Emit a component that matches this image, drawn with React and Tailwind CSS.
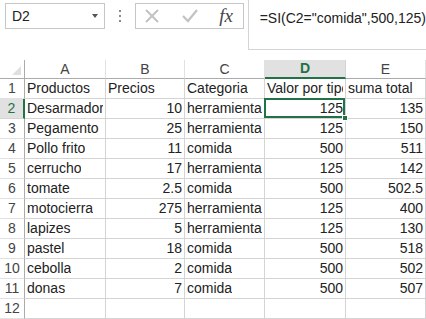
import React from 'react';

const rows = [
  ['Productos', 'Precios', 'Categoria', 'Valor por tipo', 'suma total'],
  ['Desarmadores', 10, 'herramienta', 125, 135],
  ['Pegamento', 25, 'herramienta', 125, 150],
  ['Pollo frito', 11, 'comida', 500, 511],
  ['cerrucho', 17, 'herramienta', 125, 142],
  ['tomate', 2.5, 'comida', 500, 502.5],
  ['motocierra', 275, 'herramienta', 125, 400],
  ['lapizes', 5, 'herramienta', 125, 130],
  ['pastel', 18, 'comida', 500, 518],
  ['cebolla', 2, 'comida', 500, 502],
  ['donas', 7, 'comida', 500, 507],
  ['', '', '', '', ''],
];

const cols = ['A', 'B', 'C', 'D', 'E'];

const App = () => {
  return (
    <div className="w-[426px] h-[319px] overflow-hidden bg-white text-[14px] text-[#222]" style={{ fontFamily: '"Liberation Sans", Arial, sans-serif' }}>
      {/* barra de formulas */}
      <div className="flex h-[60px] items-start">
        <div className="ml-[5px] mt-[3px] flex h-[26px] w-[101px] items-center justify-between border border-[#c6c6c6] pl-[6px] pr-[6px]">
          <span className="text-[14px] text-[#222]">D2</span>
          <span className="h-0 w-0 border-x-[3px] border-t-[4px] border-x-transparent border-t-[#555]"></span>
        </div>
        <div className="mt-[3px] flex h-[26px] w-[31px] flex-col items-center justify-center gap-[3px]">
          <span className="h-[2px] w-[2px] bg-[#888]"></span>
          <span className="h-[2px] w-[2px] bg-[#888]"></span>
          <span className="h-[2px] w-[2px] bg-[#888]"></span>
        </div>
        <div className="mt-[3px] flex h-[26px] w-[110px] items-center border border-[#c6c6c6]">
          <svg className="ml-[9px]" width="14" height="14" viewBox="0 0 14 14">
            <path d="M1 1 L13 13 M13 1 L1 13" stroke="#c2c2c2" strokeWidth="2" fill="none" />
          </svg>
          <svg className="ml-[23px]" width="16" height="14" viewBox="0 0 16 14">
            <path d="M1 7 L6 12 L15 1" stroke="#c2c2c2" strokeWidth="2.2" fill="none" />
          </svg>
          <span className="ml-[21px] text-[19px] italic text-[#444]" style={{ fontFamily: '"Liberation Serif", serif' }}>fx</span>
        </div>
        <div className="ml-[4px] flex h-[50px] flex-1 items-start border-b border-l border-[#d4d4d4] pl-[11px] pt-[8px]">
          <span>=SI(C2="comida",500,125)</span>
        </div>
      </div>

      {/* hoja */}
      <div className="grid grid-cols-[25px_81px_79px_80px_81px_80px]">
        <div className="relative h-[19px] border-b border-r border-[#ababab]">
          <span className="absolute bottom-[3px] right-[3px] h-0 w-0 border-b-[9px] border-l-[9px] border-b-[#dfdfdf] border-l-transparent"></span>
        </div>
        {cols.map((c) => (
          <div
            key={c}
            className={
              c === 'D'
                ? 'flex h-[19px] items-center justify-center border-b-2 border-r border-b-[#217346] border-r-[#d4d4d4] bg-[#e1e1e1] font-bold text-[#217346]'
                : 'flex h-[19px] items-center justify-center border-b border-r border-b-[#ababab] border-r-[#e1e1e1] text-[#444]'
            }
          >
            {c}
          </div>
        ))}

        {rows.map((r, i) => (
          <React.Fragment key={i}>
            <div
              className={
                i === 1
                  ? 'flex h-[20px] items-center justify-center border-b border-r-2 border-b-[#d4d4d4] border-r-[#217346] bg-[#e1e1e1] text-[#217346]'
                  : 'flex h-[20px] items-center justify-center border-b border-r border-b-[#e1e1e1] border-r-[#ababab] text-[#444]'
              }
            >
              {i + 1}
            </div>
            {r.map((v, j) => (
              <div
                key={j}
                className={`relative flex h-[20px] items-center whitespace-nowrap border-b border-r border-[#d4d4d4] px-[2px] ${typeof v === 'number' ? 'justify-end' : 'justify-start'} ${i === 1 && j === 3 ? 'z-10' : ''}`}
              >
                <span className="block overflow-hidden">{v}</span>
                {i === 1 && j === 3 && (
                  <>
                    <span className="absolute -left-[1px] -top-[1px] -bottom-[0px] -right-[0px] border-2 border-[#217346]"></span>
                    <span className="absolute -bottom-[3px] -right-[3px] h-[6px] w-[6px] border border-white bg-[#217346]"></span>
                  </>
                )}
              </div>
            ))}
          </React.Fragment>
        ))}
      </div>
    </div>
  );
};

export default App;
